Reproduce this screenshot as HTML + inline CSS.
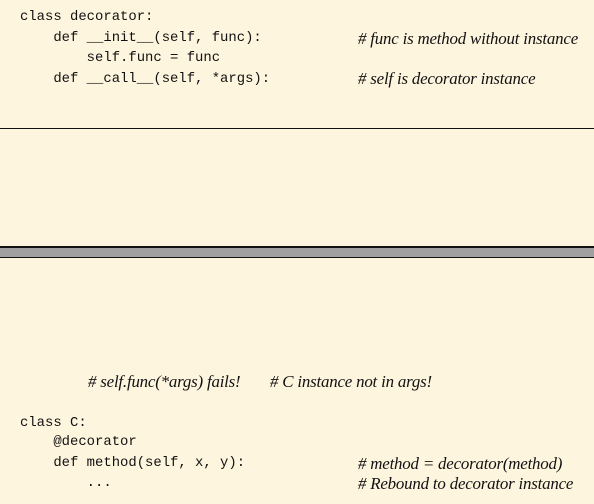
<!DOCTYPE html>
<html><head><style>
body{margin:0;width:594px;height:504px;background:#fef5df;position:relative;overflow:hidden}
.m{position:absolute;font-family:"Liberation Mono",monospace;font-size:13.9px;line-height:20px;white-space:pre;color:#111}
.c{position:absolute;font-family:"Liberation Serif",serif;font-style:italic;font-size:16.9px;line-height:20px;white-space:pre;color:#111;letter-spacing:-0.2px}
</style></head><body>
<div class="m" style="left:20px;top:7px">class decorator:</div>
<div class="m" style="left:20px;top:28px">    def __init__(self, func):</div>
<div class="m" style="left:20px;top:48px">        self.func = func</div>
<div class="m" style="left:20px;top:69px">    def __call__(self, *args):</div>
<div class="c" style="left:358px;top:29px"># func is method without instance</div>
<div class="c" style="left:358px;top:69px"># self is decorator instance</div>
<div style="position:absolute;left:0;top:128px;width:594px;height:1px;background:#111"></div>
<div style="position:absolute;left:0;top:246px;width:594px;height:2px;background:#111"></div>
<div style="position:absolute;left:0;top:248px;width:594px;height:9px;background:#a0a0a0"></div>
<div style="position:absolute;left:0;top:257px;width:594px;height:1px;background:#111"></div>
<div class="c" style="left:88px;top:372px"># self.func(*args) fails!</div>
<div class="c" style="left:270px;top:372px"># C instance not in args!</div>
<div class="m" style="left:20px;top:413px">class C:</div>
<div class="m" style="left:20px;top:432px">    @decorator</div>
<div class="m" style="left:20px;top:453px">    def method(self, x, y):</div>
<div class="m" style="left:20px;top:473px">        ...</div>
<div class="c" style="left:358px;top:454px"># method = decorator(method)</div>
<div class="c" style="left:358px;top:474px"># Rebound to decorator instance</div>
</body></html>
